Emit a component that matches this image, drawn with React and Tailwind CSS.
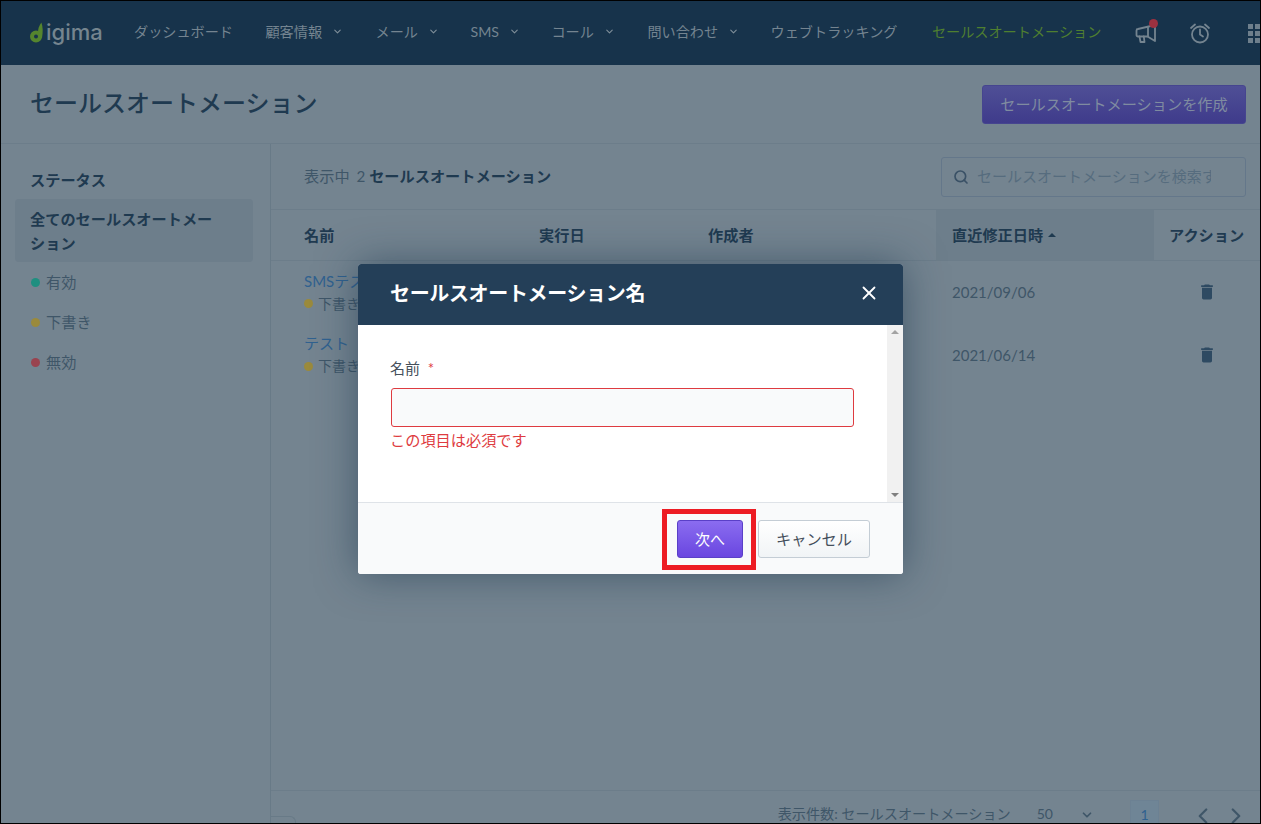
import { ChevronDown, ChevronLeft, ChevronRight, Search, X } from "lucide-react";
import { MdDelete } from "react-icons/md";

const font = "font-['Lato','Noto_Sans_CJK_JP',sans-serif]";

const navItems = [
  { label: "ダッシュボード" },
  { label: "顧客情報", menu: true },
  { label: "メール", menu: true, nudge: "-mr-[1px]" },
  { label: "SMS", menu: true, nudge: "-mr-[1px]" },
  { label: "コール", menu: true },
  { label: "問い合わせ", menu: true, nudge: "-mr-[1px]" },
  { label: "ウェブトラッキング" },
];

const statuses = [
  { label: "有効", dot: "bg-[#1f8f80]" },
  { label: "下書き", dot: "bg-[#9a8a3c]" },
  { label: "無効", dot: "bg-[#99434f]" },
];

const rows = [
  { name: "SMSテスト", date: "2021/09/06" },
  { name: "テスト", date: "2021/06/14" },
];

function Logo() {
  return (
    <div className="flex w-[104px] shrink-0 items-end pb-[2px]">
      <svg viewBox="0 0 13 21" className="mb-[2px] h-[21px] w-[13px]" aria-hidden="true">
        <circle cx="6" cy="14.5" r="4" fill="none" stroke="#55852e" strokeWidth="4" />
        <path d="M8.6 15C7.4 9.5 8 5 11.4 0.5C13 5 13 10 12 16Z" fill="#55852e" />
      </svg>
      <span className="ml-[3px] font-['Inter',sans-serif] text-[22px] font-medium leading-[26px] text-[#75858f]">
        igima
      </span>
    </div>
  );
}

function Header() {
  return (
    <header className="flex h-[64px] shrink-0 items-center bg-[#17334b] pl-[29px]">
      <Logo />
      <nav className="flex items-center gap-[32.5px] whitespace-nowrap pb-[2px] text-[14.15px] text-[#748490]">
        {navItems.map((item) => (
          <div key={item.label} className={`flex items-center ${item.nudge || ""}`}>
            <span>{item.label}</span>
            {item.menu && <ChevronDown className="ml-[10px] h-[11px] w-[11px] text-[#7f8e99]" strokeWidth={2.4} />}
          </div>
        ))}
        <span className="ml-[2px] text-[#4f7f30]">セールスオートメーション</span>
      </nav>
      <div className="relative ml-[34px] shrink-0 text-[#748490]">
        <svg viewBox="0 0 22 22" fill="none" stroke="currentColor" strokeWidth="1.8" strokeLinejoin="round" strokeLinecap="round" className="h-[22px] w-[22px]">
          <path d="M3 7L20 3V19L12.5 14.5H3A1.5 1.5 0 0 1 1.5 13V8.5A1.5 1.5 0 0 1 3 7Z" />
          <path d="M13 5.5V14.5" />
          <path d="M4.5 14.5L5.5 20H9.5L8.8 14.5" />
        </svg>
        <span className="absolute -right-[1px] -top-[3px] h-[9px] w-[9px] rounded-full bg-[#9c3140]" />
      </div>
      <svg viewBox="0 0 22 22" fill="none" stroke="currentColor" strokeWidth="1.8" strokeLinecap="round" strokeLinejoin="round" className="ml-[32px] h-[22px] w-[22px] shrink-0 text-[#748490]">
        <circle cx="11" cy="12.5" r="8" />
        <path d="M11 7.5V12.5L14 14.5" />
        <path d="M2 6L6 2.5" />
        <path d="M20 6L16 2.5" />
      </svg>
      <div className="ml-[37px] grid shrink-0 grid-cols-3 gap-[2px]">
        {Array.from({ length: 9 }).map((_, i) => (
          <span key={i} className="h-[5px] w-[5px] bg-[#6e7f8c]" />
        ))}
      </div>
    </header>
  );
}

function Sidebar() {
  return (
    <aside className="w-[270px] shrink-0 border-r border-[#687a87] pl-[14px] pr-[17px] pt-[25px]">
      <h3 className="pl-[15px] text-[15.2px] font-bold leading-[22px] text-[#1f3a50]">ステータス</h3>
      <div className="mt-[8px] rounded bg-[#6d7e8b] py-[7.5px] pl-[15px] pr-[30px] text-[15.2px] font-bold leading-[24px] text-[#1f3a50]">
        全てのセールスオートメーション
      </div>
      <ul>
        {statuses.map((s) => (
          <li key={s.label} className="flex h-[40px] items-center gap-[6px] pl-[16px] text-[15.2px] text-[#3f5668]">
            <span className={`h-[9px] w-[9px] rounded-full ${s.dot}`} />
            {s.label}
          </li>
        ))}
      </ul>
    </aside>
  );
}

function Table() {
  return (
    <div className="flex-1">
      <div className="grid h-[51px] grid-cols-[268px_169px_228px_218px_1fr] items-center border-b border-[#6c7d8a] text-[15.2px] font-bold text-[#1f3a50]">
        <div className="pl-[33px]">名前</div>
        <div>実行日</div>
        <div>作成者</div>
        <div className="flex h-full items-center gap-[5px] bg-[#6d7e8b] pl-[16px]">
          直近修正日時
          <span className="h-0 w-0 border-x-[4px] border-b-[4px] border-x-transparent border-b-[#1f3a50]" />
        </div>
        <div className="whitespace-nowrap pl-[15px]">アクション</div>
      </div>
      {rows.map((row) => (
        <div
          key={row.name}
          className="grid h-[62.5px] grid-cols-[268px_169px_228px_218px_1fr] items-center text-[15px] text-[#3f5668]"
        >
          <div className="pl-[33px]">
            <div className="leading-[22px] text-[#30618f]">{row.name}</div>
            <div className="mt-[1px] flex items-center gap-[5px] text-[14px] leading-[22px]">
              <span className="h-[9px] w-[9px] rounded-full bg-[#9a8a3c]" />
              下書き
            </div>
          </div>
          <div />
          <div />
          <div className="pl-[16px]">{row.date}</div>
          <div className="flex justify-center">
            <MdDelete className="h-[20px] w-[20px] text-[#2e4a62]" />
          </div>
        </div>
      ))}
    </div>
  );
}

function Footer() {
  return (
    <div className="flex h-[33px] shrink-0 items-start justify-end border-t border-[#6c7d8a] pt-[9px] text-[14.15px] text-[#3f5668]">
      <span className="mr-auto mt-[16px] h-[10px] w-[25px] rounded-tr-[6px] border-r border-t border-[#687a87]" />
      <span className="mt-[4px] leading-[20px]">表示件数: セールスオートメーション</span>
      <span className="ml-[26px] mt-[4px] text-[14px] leading-[20px]">50</span>
      <ChevronDown className="ml-[27px] mt-[8px] h-[14px] w-[14px]" strokeWidth={3} />
      <span className="ml-[36px] flex h-[24px] w-[29px] justify-center border border-[#6c8193] bg-[#6f8596] pt-[3px] text-[#30618f]">
        1
      </span>
      <ChevronLeft className="ml-[31px] mt-[3px] h-[26px] w-[26px]" strokeWidth={2} />
      <ChevronRight className="ml-[7px] mr-[11px] mt-[3px] h-[26px] w-[26px]" strokeWidth={2} />
    </div>
  );
}

function Modal() {
  return (
    <div className="absolute inset-0 flex justify-center pt-[263px]">
      <div className="relative flex h-[310px] w-[545px] flex-col overflow-visible rounded-[3px] bg-white shadow-[0_0_40px_rgba(23,51,75,0.55)]">
        <div className="flex h-[61px] shrink-0 items-center justify-between rounded-t-[3px] bg-[#243f58] pb-[3px] pl-[32px] pr-[23px]">
          <h2 className="text-[20px] font-bold tracking-[-0.35px] text-white">セールスオートメーション名</h2>
          <X className="h-[22px] w-[22px] text-white" strokeWidth={2} />
        </div>
        <div className="flex h-[178px] shrink-0 border-b border-[#dfe3e8]">
          <div className="flex-1 pl-[32px] pt-[32px]">
            <label className="block text-[15px] leading-[22px] text-[#454f5b]">
              名前 <span className="ml-[4px] text-[#de3b40]">*</span>
            </label>
            <input className="ml-[1px] mt-[9px] block h-[39px] w-[463px] rounded-[3px] border border-[#de3b40] bg-[#f9fafb] outline-none" />
            <p className="mt-[2px] text-[15.2px] leading-[22px] text-[#de3b40]">この項目は必須です</p>
          </div>
          <div className="flex w-[16px] flex-col items-center justify-between bg-[#f1f1f1] py-[5px]">
            <span className="h-0 w-0 border-x-[4px] border-b-[4px] border-x-transparent border-b-[#a3a3a3]" />
            <span className="h-0 w-0 border-x-[4px] border-t-[4px] border-x-transparent border-t-[#7f7f7f]" />
          </div>
        </div>
        <div className="flex flex-1 items-start justify-end gap-[15px] rounded-b-[3px] bg-[#f9fafb] pr-[33px] pt-[17px]">
          <button className="relative h-[38px] w-[66px] rounded-[3px] border border-[#5a3fc8] bg-gradient-to-b from-[#8b6cf0] to-[#6a45e0] text-[15px] text-white">
            次へ
            <span className="absolute -bottom-[13px] -left-[16px] -right-[14px] -top-[12px] border-[5px] border-[#ed1c24]" />
          </button>
          <button className="h-[38px] w-[112px] rounded-[3px] border border-[#c4cdd5] bg-gradient-to-b from-white to-[#f1f4f6] text-[15.2px] text-[#454f5b]">
            キャンセル
          </button>
        </div>
      </div>
    </div>
  );
}

export default function App() {
  return (
    <div className={`relative flex h-[824px] w-[1261px] flex-col overflow-hidden border border-black bg-[#748490] ${font}`}>
      <Header />
      <div className="flex h-[79px] shrink-0 items-center justify-between border-b border-[#6c7d8a] pl-[29px] pr-[14px]">
        <h1 className="mb-[2px] text-[24px] font-medium leading-[32px] text-[#1f3a50]">セールスオートメーション</h1>
        <button className="h-[39px] w-[264px] rounded-[3px] border border-[#46458f] bg-gradient-to-b from-[#4f4f96] to-[#3f3b8b] text-[15.2px] text-[#7f8ba0]">
          セールスオートメーションを作成
        </button>
      </div>
      <div className="flex min-h-0 flex-1">
        <Sidebar />
        <main className="flex min-w-0 flex-1 flex-col">
          <div className="flex h-[66px] shrink-0 items-center justify-between border-b border-[#6c7d8a] pl-[33px] pr-[14px]">
            <p className="text-[15.2px] text-[#3f5668]">
              表示中 <span className="ml-[3px]">2</span> <span className="font-bold text-[#1f3a50]">セールスオートメーション</span>
            </p>
            <div className="flex h-[40px] w-[305px] items-center rounded-[3px] border border-[#64778a] pl-[11px]">
              <Search className="h-[16px] w-[16px] shrink-0 text-[#3a5166]" strokeWidth={2.5} />
              <input
                placeholder="セールスオートメーションを検索する"
                className="ml-[8px] w-[234px] bg-transparent text-[15px] outline-none placeholder:text-[#566c7e]"
              />
            </div>
          </div>
          <Table />
          <Footer />
        </main>
      </div>
      <Modal />
    </div>
  );
}
